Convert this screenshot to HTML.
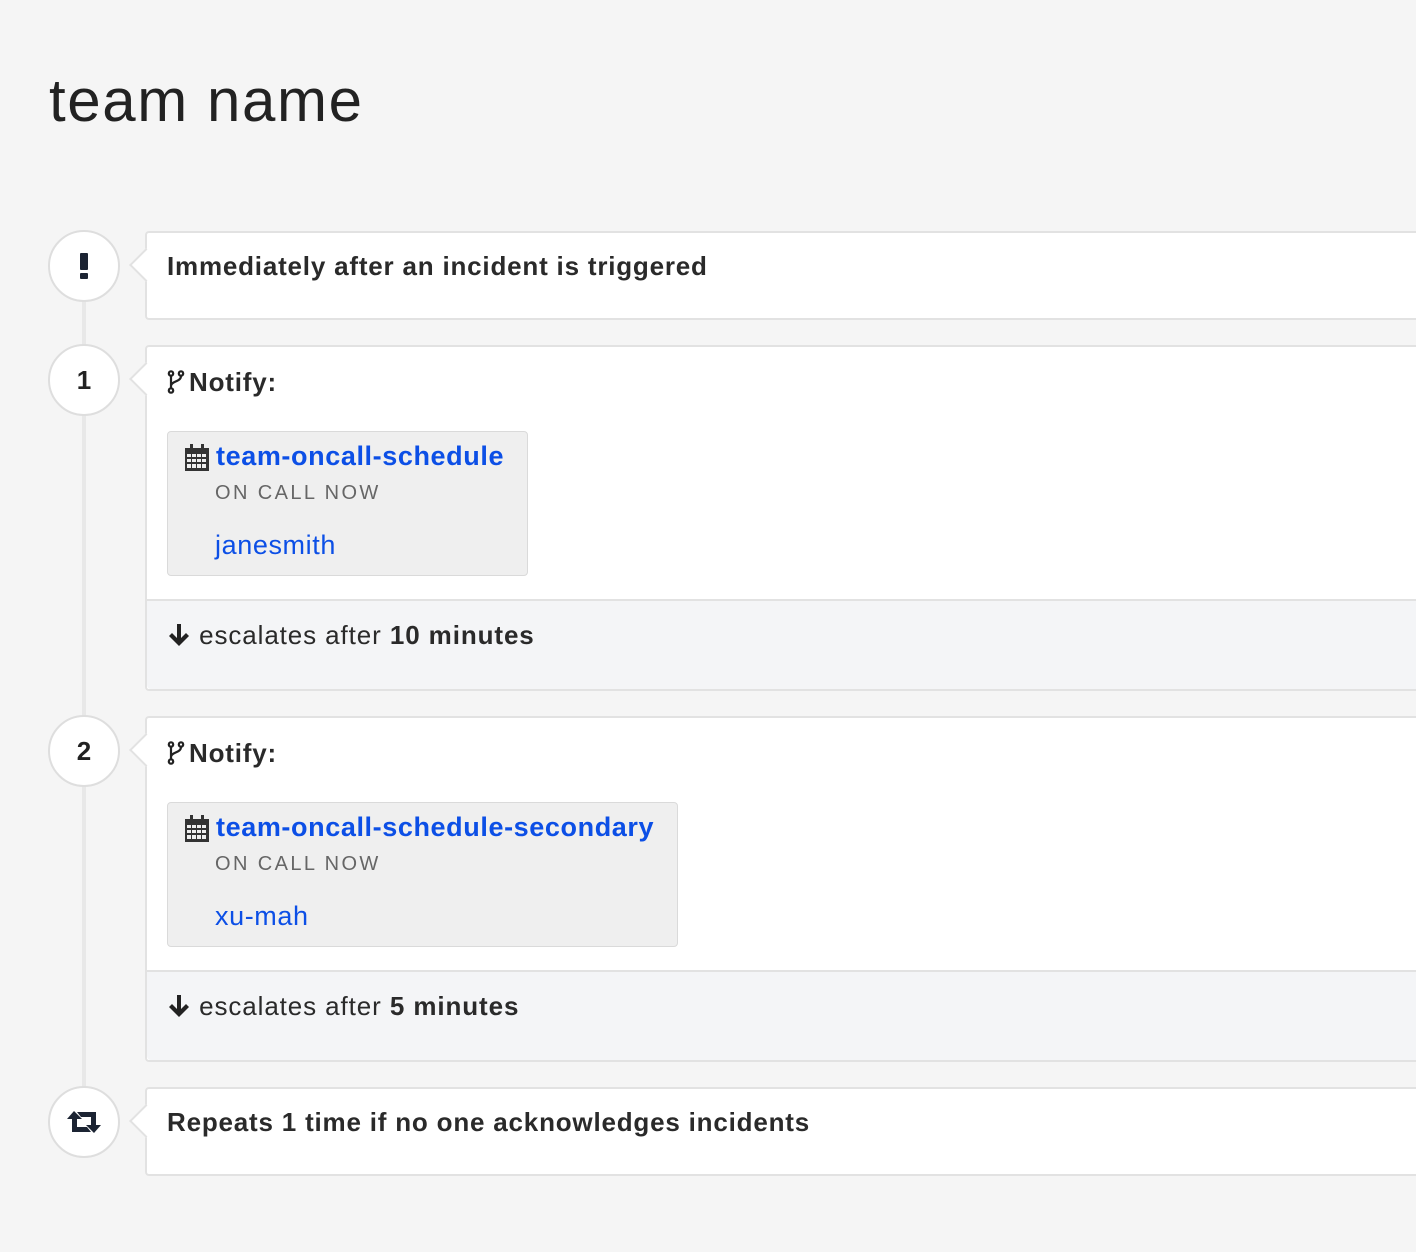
<!DOCTYPE html>
<html><head><style>
body{margin:0;width:1416px;height:1252px;background:#f5f5f5;font-family:"Liberation Sans",sans-serif;color:#2a2a2a;position:relative;overflow:hidden}
.a{position:absolute}
h1{position:absolute;left:49px;top:66px;margin:0;font-weight:normal;font-size:60px;color:#222;line-height:70px;letter-spacing:1.6px}
.line{left:82px;top:266px;width:4px;height:856px;background:#e8e8e8}
.c{width:68px;height:68px;border:2px solid #dedede;border-radius:50%;background:#fff;left:48px;display:flex;align-items:center;justify-content:center;font-weight:bold;font-size:26px;color:#222}
.card{left:145px;width:1300px;background:#fff;border:2px solid #e2e2e2;border-right:none;border-radius:4px 0 0 4px;box-sizing:border-box}
.card:before{content:"";position:absolute;left:-13px;top:20px;width:22px;height:22px;background:#fff;border-left:2px solid #e2e2e2;border-bottom:2px solid #e2e2e2;transform:rotate(45deg)}
.h{position:absolute;left:20px;font-weight:bold;font-size:26px;letter-spacing:0.8px;white-space:nowrap}
.foot{position:absolute;left:0;right:0;bottom:0;height:88px;background:#f4f5f7;border-top:2px solid #e2e2e2;border-radius:0 0 0 4px}
.esc{position:absolute;left:20px;top:19px;font-size:26px;letter-spacing:0.9px;color:#2a2a2a;white-space:nowrap}
.sched{position:absolute;left:20px;top:84px;height:145px;background:#efefef;border:1px solid #dadada;border-radius:4px;box-sizing:border-box}
.sn{position:absolute;left:48px;top:9px;font-weight:bold;font-size:27px;letter-spacing:0.6px;color:#0c4fe6;white-space:nowrap}
.oc{position:absolute;left:47px;top:50px;font-size:20px;letter-spacing:2.4px;color:#666;white-space:nowrap}
.u{position:absolute;left:47px;top:98px;font-size:27px;letter-spacing:0.6px;color:#0c4fe6}
.cal{position:absolute;left:16px;top:12px}
</style></head><body>
<h1>team name</h1>
<div class="a line"></div>

<div class="a c" style="top:230px"><svg width="12" height="28" viewBox="0 0 12 28"><rect x="2" y="1" width="8" height="17" rx="1" fill="#1c2433"/><rect x="2" y="21" width="8" height="6" rx="1" fill="#1c2433"/></svg></div>
<div class="a card" style="top:231px;height:89px"><div class="h" style="top:18px">Immediately after an incident is triggered</div></div>

<div class="a c" style="top:344px">1</div>
<div class="a card" style="top:345px;height:346px">
<div class="h" style="top:20px"><svg width="18" height="24" viewBox="0 0 18 24" style="vertical-align:-3px;margin-right:4px"><g fill="none" stroke="#222" stroke-width="2.2"><circle cx="4" cy="3.5" r="2.2"/><circle cx="4" cy="20.5" r="2.2"/><circle cx="14" cy="3.5" r="2.2"/><path d="M4 6v12M14 6c0 6-10 5-10 10"/></g></svg>Notify:</div>
<div class="sched" style="width:361px"><svg class="cal" width="26" height="28" viewBox="0 0 26 28"><rect x="1" y="4" width="24" height="23" fill="#333"/><rect x="6" y="0" width="3" height="7" fill="#333"/><rect x="17" y="0" width="3" height="7" fill="#333"/><g fill="#efefef"><rect x="3" y="10" width="4" height="3"/><rect x="8" y="10" width="4" height="3"/><rect x="13" y="10" width="4" height="3"/><rect x="18" y="10" width="4" height="3"/><rect x="3" y="15" width="4" height="3"/><rect x="8" y="15" width="4" height="3"/><rect x="13" y="15" width="4" height="3"/><rect x="18" y="15" width="4" height="3"/><rect x="3" y="20" width="4" height="4"/><rect x="8" y="20" width="4" height="4"/><rect x="13" y="20" width="4" height="4"/><rect x="18" y="20" width="4" height="4"/></g></svg><div class="sn">team-oncall-schedule</div><div class="oc">ON CALL NOW</div><div class="u">janesmith</div></div>
<div class="foot"><div class="esc"><svg width="24" height="24" viewBox="0 0 24 24" style="vertical-align:-3px"><path d="M12 23L2 13l3-3 5 5V1h4v14l5-5 3 3z" fill="#222"/></svg> escalates after <b>10 minutes</b></div></div>
</div>

<div class="a c" style="top:715px">2</div>
<div class="a card" style="top:716px;height:346px">
<div class="h" style="top:20px"><svg width="18" height="24" viewBox="0 0 18 24" style="vertical-align:-3px;margin-right:4px"><g fill="none" stroke="#222" stroke-width="2.2"><circle cx="4" cy="3.5" r="2.2"/><circle cx="4" cy="20.5" r="2.2"/><circle cx="14" cy="3.5" r="2.2"/><path d="M4 6v12M14 6c0 6-10 5-10 10"/></g></svg>Notify:</div>
<div class="sched" style="width:511px"><svg class="cal" width="26" height="28" viewBox="0 0 26 28"><rect x="1" y="4" width="24" height="23" fill="#333"/><rect x="6" y="0" width="3" height="7" fill="#333"/><rect x="17" y="0" width="3" height="7" fill="#333"/><g fill="#efefef"><rect x="3" y="10" width="4" height="3"/><rect x="8" y="10" width="4" height="3"/><rect x="13" y="10" width="4" height="3"/><rect x="18" y="10" width="4" height="3"/><rect x="3" y="15" width="4" height="3"/><rect x="8" y="15" width="4" height="3"/><rect x="13" y="15" width="4" height="3"/><rect x="18" y="15" width="4" height="3"/><rect x="3" y="20" width="4" height="4"/><rect x="8" y="20" width="4" height="4"/><rect x="13" y="20" width="4" height="4"/><rect x="18" y="20" width="4" height="4"/></g></svg><div class="sn">team-oncall-schedule-secondary</div><div class="oc">ON CALL NOW</div><div class="u">xu-mah</div></div>
<div class="foot"><div class="esc"><svg width="24" height="24" viewBox="0 0 24 24" style="vertical-align:-3px"><path d="M12 23L2 13l3-3 5 5V1h4v14l5-5 3 3z" fill="#222"/></svg> escalates after <b>5 minutes</b></div></div>
</div>

<div class="a c" style="top:1086px"><svg width="36" height="24" viewBox="0 0 36 24"><path d="M8 1L1 9h5v13h19l-4-5H11V9h5z" fill="#1c2433"/><path d="M28 23l7-8h-5V2H11l4 5h10v8h-5z" fill="#1c2433"/></svg></div>
<div class="a card" style="top:1087px;height:89px"><div class="h" style="top:18px">Repeats 1 time if no one acknowledges incidents</div></div>
</body></html>
